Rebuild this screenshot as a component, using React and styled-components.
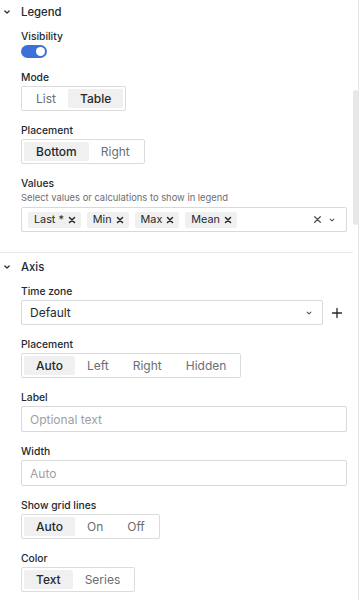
import React from "react";
import styled, { createGlobalStyle } from "styled-components";

const GlobalStyle = createGlobalStyle`
  body {
    margin: 0;
    background: #ffffff;
    font-family: Inter, "Noto Sans", sans-serif;
    color: #24292e;
  }
  * {
    box-sizing: border-box;
  }
`;

function Chevron({ size = 14, color = "#24292e" }) {
  return (
    <svg width={size} height={size} viewBox="0 0 14 14" fill="none">
      <polyline
        points="4.8,6 7,8 9.2,6"
        stroke={color}
        strokeWidth="1.2"
        strokeLinecap="round"
        strokeLinejoin="round"
      />
    </svg>
  );
}

function Cross({ size = 8, width = 1.4, color = "#24292e" }) {
  return (
    <svg width={size} height={size} viewBox="0 0 8 8" fill="none">
      <path d="M1.5 1.5 L6.5 6.5 M6.5 1.5 L1.5 6.5" stroke={color} strokeWidth={width} strokeLinecap="round" />
    </svg>
  );
}

function Plus() {
  return (
    <svg width="12" height="12" viewBox="0 0 12 12" fill="none">
      <path d="M6 1.5 V10.5 M1.5 6 H10.5" stroke="#24292e" strokeWidth="1.3" strokeLinecap="round" />
    </svg>
  );
}

function RadioButtons({ options, value }) {
  return (
    <RadioGroup>
      {options.map((o) => (
        <RadioOption key={o} $active={o === value}>
          {o}
        </RadioOption>
      ))}
    </RadioGroup>
  );
}

function Category({ title, children }) {
  return (
    <CategoryBox>
      <CategoryHeader>
        <Chevron />
        <CategoryTitle>{title}</CategoryTitle>
      </CategoryHeader>
      <CategoryBody>{children}</CategoryBody>
    </CategoryBox>
  );
}

export default function App() {
  const chips = ["Last *", "Min", "Max", "Mean"];
  return (
    <>
      <GlobalStyle />
      <Frame>
        <Pane>
          <Scrolled>
            <Category title="Legend">
              <Field>
                <Label>Visibility</Label>
                <Switch>
                  <Knob />
                </Switch>
              </Field>
              <Field>
                <Label>Mode</Label>
                <RadioButtons options={["List", "Table"]} value="Table" />
              </Field>
              <Field>
                <Label>Placement</Label>
                <RadioButtons options={["Bottom", "Right"]} value="Bottom" />
              </Field>
              <Field>
                <Label $tight>Values</Label>
                <Description>Select values or calculations to show in legend</Description>
                <MultiSelect>
                  {chips.map((c) => (
                    <Chip key={c}>
                      {c}
                      <Cross size={8} width={1.5} />
                    </Chip>
                  ))}
                  <Spacer />
                  <Indicators>
                    <Cross size={9} width={1.1} color="#4a4f55" />
                    <Chevron size={12} color="#4a4f55" />
                  </Indicators>
                </MultiSelect>
              </Field>
            </Category>

            <Category title="Axis">
              <Field>
                <Label>Time zone</Label>
                <Row>
                  <Select>
                    <span>Default</span>
                    <Chevron size={12} color="#4a4f55" />
                  </Select>
                  <PlusButton>
                    <Plus />
                  </PlusButton>
                </Row>
              </Field>
              <Field>
                <Label>Placement</Label>
                <RadioButtons options={["Auto", "Left", "Right", "Hidden"]} value="Auto" />
              </Field>
              <Field>
                <Label>Label</Label>
                <Input placeholder="Optional text" />
              </Field>
              <Field>
                <Label>Width</Label>
                <Input placeholder="Auto" />
              </Field>
              <Field>
                <Label>Show grid lines</Label>
                <RadioButtons options={["Auto", "On", "Off"]} value="Auto" />
              </Field>
              <Field>
                <Label>Color</Label>
                <RadioButtons options={["Text", "Series"]} value="Text" />
              </Field>
            </Category>
          </Scrolled>
        </Pane>
        <ScrollTrack>
          <ScrollThumb $top={90} $height={135} />
        </ScrollTrack>
      </Frame>
    </>
  );
}

const Frame = styled.div`
  display: flex;
  width: 359px;
  height: 600px;
  overflow: hidden;
  border-right: 1px solid #e6e6e7;
`;

const Pane = styled.div`
  width: 353px;
  height: 600px;
  overflow: hidden;
`;

const Scrolled = styled.div`
  margin-top: -2px;
`;

const ScrollTrack = styled.div`
  width: 5px;
  display: flex;
  flex-direction: column;
`;

const ScrollThumb = styled.div`
  margin-top: ${(p) => p.$top}px;
  height: ${(p) => p.$height}px;
  width: 5px;
  border-radius: 3px;
  background: #e7e7e8;
`;

const CategoryBox = styled.div`
  border-bottom: 1px solid #e9e9ea;
`;

const CategoryHeader = styled.div`
  display: flex;
  align-items: center;
  height: 28px;
`;

const CategoryTitle = styled.span`
  margin-left: 7px;
  font-size: 11.3px;
  font-weight: 500;
  color: #24292e;
`;

const CategoryBody = styled.div`
  display: flex;
  flex-direction: column;
  padding: 3px 6px 8px 21px;
`;

const Field = styled.div`
  display: flex;
  flex-direction: column;
  align-items: flex-start;
  margin-bottom: 12px;
`;

const Label = styled.div`
  font-size: 10.3px;
  font-weight: 500;
  line-height: 14px;
  margin-bottom: ${(p) => (p.$tight ? 0 : 2)}px;
  color: #24292e;
`;

const Description = styled.div`
  font-size: 9.4px;
  line-height: 14px;
  color: #6a6e73;
  margin-top: 1px;
  margin-bottom: 2px;
`;

const Switch = styled.div`
  width: 26px;
  height: 13px;
  border-radius: 7px;
  background: #3d71d9;
  display: flex;
  align-items: center;
  justify-content: flex-end;
  padding-right: 2px;
`;

const Knob = styled.div`
  width: 9px;
  height: 9px;
  border-radius: 50%;
  background: #ffffff;
`;

const RadioGroup = styled.div`
  display: inline-flex;
  height: 25px;
  padding: 2px;
  border: 1px solid #dcdcdd;
  border-radius: 2px;
`;

const RadioOption = styled.div`
  height: 19px;
  padding: 0 12px;
  display: flex;
  align-items: center;
  font-size: 12px;
  font-weight: ${(p) => (p.$active ? 500 : 400)};
  color: ${(p) => (p.$active ? "#24292e" : "#6a6e73")};
  background: ${(p) => (p.$active ? "#f0f0f1" : "transparent")};
  border-radius: 2px;
`;

const MultiSelect = styled.div`
  width: 100%;
  height: 25px;
  display: flex;
  align-items: center;
  gap: 6px;
  padding: 0 8px 0 6px;
  border: 1px solid #d8d9db;
  border-radius: 2px;
`;

const Chip = styled.div`
  height: 16px;
  display: flex;
  align-items: center;
  gap: 4px;
  padding: 0 5px 0 6px;
  background: #f0f0f1;
  border-radius: 2px;
  font-size: 10.8px;
  color: #24292e;
`;

const Spacer = styled.div`
  flex: 1;
`;

const Indicators = styled.div`
  display: flex;
  align-items: center;
  gap: 4px;
`;

const Row = styled.div`
  display: flex;
  align-items: center;
  width: 100%;
`;

const Select = styled.div`
  flex: 1;
  height: 25px;
  display: flex;
  align-items: center;
  justify-content: space-between;
  padding: 0 7px 0 8px;
  border: 1px solid #d8d9db;
  border-radius: 2px;
  font-size: 12px;
  color: #24292e;
`;

const PlusButton = styled.div`
  width: 20px;
  height: 25px;
  margin-left: 4px;
  display: flex;
  align-items: center;
  justify-content: center;
`;

const Input = styled.input`
  width: 100%;
  height: 26px;
  padding: 0 8px;
  border: 1px solid #d8d9db;
  border-radius: 2px;
  font-family: Inter, "Noto Sans", sans-serif;
  font-size: 12px;
  color: #24292e;
  outline: none;
  &::placeholder {
    color: #9da0a4;
  }
`;
